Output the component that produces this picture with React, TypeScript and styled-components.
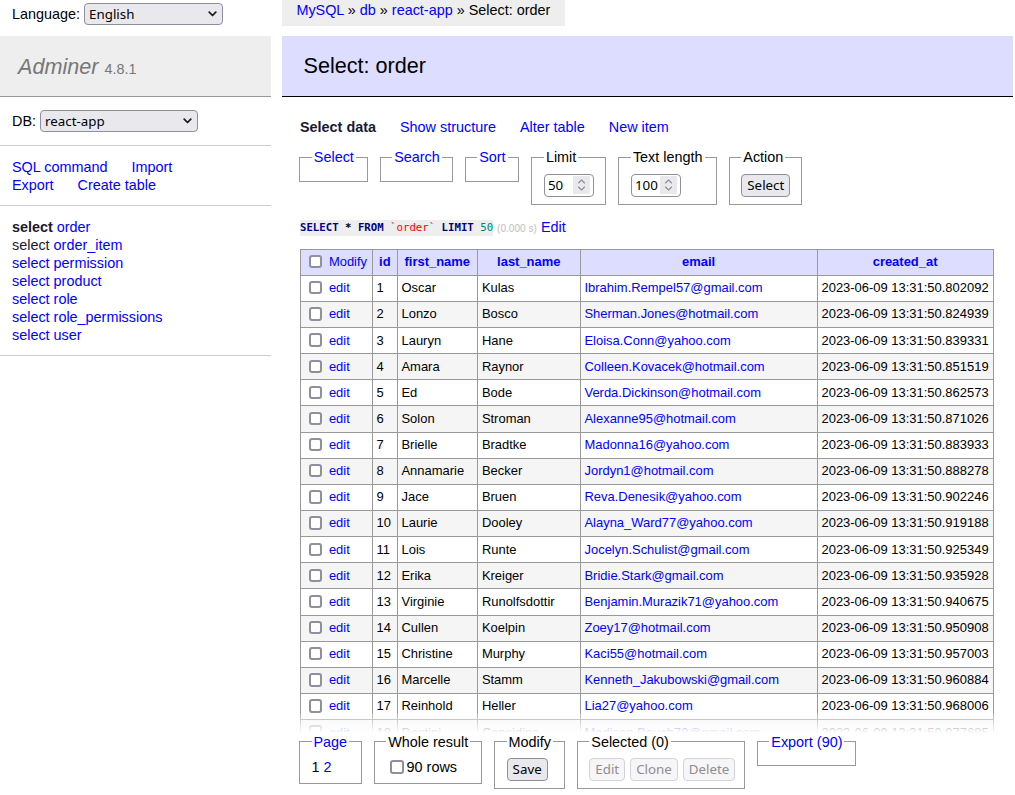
import React from "react";
import styled, { createGlobalStyle } from "styled-components";

const Global = createGlobalStyle`
  html, body { margin: 0; padding: 0; background: #fff; }
  html { scrollbar-width: none; }
  ::-webkit-scrollbar { display: none; }
  body {
    font-family: "Liberation Sans", Arial, sans-serif;
    font-size: 14.4px;
    line-height: 18px;
    color: #000;
  }
  a { color: #0000ff; text-decoration: none; }
`;

const Page = styled.div`
  height: 100vh;
  overflow: hidden;
  display: grid;
  grid-template-columns: 282px 731px;
  align-items: start;
`;

/* ---------- sidebar ---------- */
const Sidebar = styled.aside`
  width: 271px;
`;

const LangBar = styled.div`
  height: 36px;
  box-sizing: border-box;
  padding: 3px 12px 0;
  display: flex;
  align-items: flex-start;
  gap: 4px;
  line-height: 22px;
`;

const Logo = styled.h1`
  margin: 0;
  padding: 16.5px 18px;
  font-size: 21.6px;
  line-height: 27px;
  height: 27px;
  font-weight: normal;
  background: #eee;
  border-bottom: 1px solid #999;
  color: #777;
  white-space: nowrap;
`;

const LogoName = styled.span`
  font-style: italic;
`;

const Version = styled.span`
  font-size: 14.4px;
  line-height: 14px;
  color: #777;
`;

const MenuBlock = styled.div`
  padding: 11.5px 12px;
  border-bottom: 1px solid #ccc;
`;

const DbRow = styled.div`
  display: flex;
  align-items: center;
  gap: 4px;
  height: 25px;
`;

const LinkLine = styled.div`
  display: flex;
  gap: 24px;
  white-space: nowrap;
`;

const TableLine = styled.div`
  white-space: nowrap;
`;

const SelectWord = styled.a<{ $active?: boolean; $dark?: boolean }>`
  color: ${(p) => (p.$dark ? "#1a1a33" : "#0000ff")};
  font-weight: ${(p) => (p.$active ? "bold" : "normal")};
`;

const DropWrap = styled.span`
  position: relative;
  display: inline-block;
  vertical-align: top;
`;

const Drop = styled.select<{ $w: number }>`
  appearance: none;
  -webkit-appearance: none;
  width: ${(p) => p.$w}px;
  height: 22px;
  box-sizing: border-box;
  margin: 0;
  padding: 0 20px 0 4px;
  border: 1px solid #8f8f9d;
  border-radius: 4px;
  background: #e9e9ed;
  color: #000;
  font-family: "Noto Sans", sans-serif;
  font-size: 13.33px;
  line-height: 20px;
  display: block;
`;

const ChevronSlot = styled.span`
  position: absolute;
  right: 6px;
  top: 8px;
  display: flex;
  pointer-events: none;
`;

const Chevron = () => (
  <svg width="9" height="6" viewBox="0 0 9 6">
    <path
      d="M1.2 1.2L4.5 4.5L7.8 1.2"
      fill="none"
      stroke="#1c1b22"
      strokeWidth="1.7"
      strokeLinecap="round"
      strokeLinejoin="round"
    />
  </svg>
);

const Dropdown = ({ w, value }: { w: number; value: string }) => (
  <DropWrap>
    <Drop $w={w} defaultValue={value}>
      <option>{value}</option>
    </Drop>
    <ChevronSlot>
      <Chevron />
    </ChevronSlot>
  </DropWrap>
);

/* ---------- main ---------- */
const Main = styled.main`
  min-width: 0;
`;

const Breadcrumb = styled.nav`
  display: inline-block;
  vertical-align: top;
  height: 25.7px;
  line-height: 21px;
  padding: 0 14.4px;
  background: #eee;
  white-space: nowrap;
`;

const Title = styled.h2`
  margin: 10.3px 0 21px;
  padding: 16.5px 21.6px;
  font-size: 21.6px;
  line-height: 27px;
  font-weight: normal;
  background: #ddf;
  border-bottom: 1px solid #000;
  color: #000;
`;

const Content = styled.div`
  padding: 0 20px 0 18px;
`;

const Tabs = styled.div`
  display: flex;
  gap: 24px;
  white-space: nowrap;
`;

const Tab = styled.a<{ $active?: boolean }>`
  color: ${(p) => (p.$active ? "#1a1a33" : "#0000ff")};
  font-weight: ${(p) => (p.$active ? "bold" : "normal")};
`;

const BoxRow = styled.div`
  margin: 12.5px 0 0 -0.7px;
  display: flex;
  align-items: flex-start;
  gap: 12px;
`;

const Box = styled.fieldset<{ $w?: number }>`
  margin: 0;
  padding: 7.2px 11.52px;
  border: 1px solid #999;
  min-width: 0;
  width: ${(p) => (p.$w ? `${p.$w}px` : "auto")};
  box-sizing: border-box;
  flex: none;
  line-height: 18px;
  white-space: nowrap;
`;

const Legend = styled.legend`
  padding: 0 2px;
  line-height: 18px;
`;

const NumWrap = styled.span`
  display: inline-flex;
  align-items: center;
  width: 50px;
  height: 23px;
  box-sizing: border-box;
  border: 1px solid #8f8f9d;
  border-radius: 4px;
  background: #fff;
  padding: 0 3px 0 3px;
  vertical-align: middle;
`;

const NumInput = styled.input`
  flex: 1;
  min-width: 0;
  width: 10px;
  border: 0;
  outline: 0;
  margin: 0;
  padding: 0;
  background: transparent;
  color: #000;
  font-family: "Noto Sans", sans-serif;
  font-size: 13.33px;
  appearance: textfield;
  -moz-appearance: textfield;
  &::-webkit-inner-spin-button,
  &::-webkit-outer-spin-button {
    -webkit-appearance: none;
    margin: 0;
  }
`;

const Spinner = styled.span`
  flex: none;
  width: 17px;
  height: 18px;
  background: #e9e9ed;
  display: flex;
  align-items: center;
  justify-content: center;
`;

const SpinIcon = () => (
  <svg width="9" height="14" viewBox="0 0 9 14">
    <path d="M1.5 5L4.5 2L7.5 5" fill="none" stroke="#8e8e96" strokeWidth="1.1" strokeLinecap="round" strokeLinejoin="round" />
    <path d="M1.5 9L4.5 12L7.5 9" fill="none" stroke="#8e8e96" strokeWidth="1.1" strokeLinecap="round" strokeLinejoin="round" />
  </svg>
);

const NumberField = ({ value }: { value: number }) => (
  <NumWrap>
    <NumInput type="number" defaultValue={value} />
    <Spinner>
      <SpinIcon />
    </Spinner>
  </NumWrap>
);

const Button = styled.button`
  height: 23.4px;
  box-sizing: border-box;
  margin: 0;
  padding: 0 5px;
  border: 1px solid #8f8f9d;
  border-radius: 4px;
  background: #e9e9ed;
  color: #000;
  font-family: "Noto Sans", sans-serif;
  font-size: 13.33px;
  line-height: 20px;
  vertical-align: middle;
  &:disabled {
    background: #f6f6f8;
    border-color: #d3d3d9;
    color: #8e8e8e;
  }
`;

const ButtonRow = styled.span`
  display: inline-flex;
  gap: 5px;
  vertical-align: middle;
`;

const SqlLine = styled.p`
  margin: 12.5px 0 0;
  white-space: nowrap;
`;

const Code = styled.code`
  background: #eee;
  font-family: "DejaVu Sans Mono", monospace;
  font-size: 10.7px;
  padding: 1.4px 0 1.6px;
`;

const Kw = styled.span`
  color: #000080;
  font-weight: bold;
`;

const Op = styled.span`
  color: #000;
  font-weight: bold;
`;

const Ident = styled.span`
  color: #ff0000;
`;

const Num = styled.span`
  color: #007f7f;
`;

const Time = styled.span`
  color: silver;
  font-size: 10.08px;
`;

const Form = styled.form`
  margin: 0;
`;

const Grid = styled.table`
  margin-top: 11px;
  border-collapse: collapse;
  table-layout: fixed;
  width: 692.6px;
  font-size: 12.96px;
  line-height: 16.2px;
`;

const HeadRow = styled.tr`
  height: 26px;
`;

const HeadLead = styled.td`
  background: #ddf;
  border: 1px solid #999;
  padding: 2.6px 3.9px;
  white-space: nowrap;
`;

const HeadCell = styled.th`
  background: #ddf;
  border: 1px solid #999;
  padding: 2.6px 6.5px;
  text-align: center;
  font-weight: bold;
  white-space: nowrap;
`;

const BodyRow = styled.tr`
  height: 26.15px;
  &:nth-child(2n) {
    background: #f5f5f5;
  }
`;

const Cell = styled.td`
  border: 1px solid #999;
  padding: 2.6px 3.9px;
  white-space: nowrap;
  overflow: hidden;
`;

const Check = styled.input`
  appearance: none;
  -webkit-appearance: none;
  width: 13.4px;
  height: 13.4px;
  box-sizing: border-box;
  border: 2px solid #8f8f9d;
  border-radius: 3px;
  background: #fff;
  margin: 0 3px 0 4px;
  vertical-align: middle;
  position: relative;
  top: -1px;
`;

const Footer = styled.div`
  position: sticky;
  bottom: 0;
  margin-right: -20px;
  border-top: 20px solid rgba(255, 255, 255, 0.7);
  border-image: linear-gradient(rgba(255, 255, 255, 0.2), #fff) 100% 0;
`;

const FooterInner = styled.div`
  background: #fff;
  padding: 0 0 5.7px;
  margin-left: -1px;
  display: flex;
  align-items: flex-start;
  gap: 12px;
`;

const Current = styled.span`
  color: #000;
`;

const CheckLabel = styled.label`
  white-space: nowrap;
`;

type Row = { id: number; first: string; last: string; email: string; ts: string };

const rows: Row[] = [
  { id: 1, first: "Oscar", last: "Kulas", email: "Ibrahim.Rempel57@gmail.com", ts: "802092" },
  { id: 2, first: "Lonzo", last: "Bosco", email: "Sherman.Jones@hotmail.com", ts: "824939" },
  { id: 3, first: "Lauryn", last: "Hane", email: "Eloisa.Conn@yahoo.com", ts: "839331" },
  { id: 4, first: "Amara", last: "Raynor", email: "Colleen.Kovacek@hotmail.com", ts: "851519" },
  { id: 5, first: "Ed", last: "Bode", email: "Verda.Dickinson@hotmail.com", ts: "862573" },
  { id: 6, first: "Solon", last: "Stroman", email: "Alexanne95@hotmail.com", ts: "871026" },
  { id: 7, first: "Brielle", last: "Bradtke", email: "Madonna16@yahoo.com", ts: "883933" },
  { id: 8, first: "Annamarie", last: "Becker", email: "Jordyn1@hotmail.com", ts: "888278" },
  { id: 9, first: "Jace", last: "Bruen", email: "Reva.Denesik@yahoo.com", ts: "902246" },
  { id: 10, first: "Laurie", last: "Dooley", email: "Alayna_Ward77@yahoo.com", ts: "919188" },
  { id: 11, first: "Lois", last: "Runte", email: "Jocelyn.Schulist@gmail.com", ts: "925349" },
  { id: 12, first: "Erika", last: "Kreiger", email: "Bridie.Stark@gmail.com", ts: "935928" },
  { id: 13, first: "Virginie", last: "Runolfsdottir", email: "Benjamin.Murazik71@yahoo.com", ts: "940675" },
  { id: 14, first: "Cullen", last: "Koelpin", email: "Zoey17@hotmail.com", ts: "950908" },
  { id: 15, first: "Christine", last: "Murphy", email: "Kaci55@hotmail.com", ts: "957003" },
  { id: 16, first: "Marcelle", last: "Stamm", email: "Kenneth_Jakubowski@gmail.com", ts: "960884" },
  { id: 17, first: "Reinhold", last: "Heller", email: "Lia27@yahoo.com", ts: "968006" },
  { id: 18, first: "Destini", last: "Considine", email: "Madison.Bauch70@gmail.com", ts: "977685" },
  { id: 19, first: "Kailey", last: "Hills", email: "Tremaine.Ryan@yahoo.com", ts: "985114" },
  { id: 20, first: "Gus", last: "Wiza", email: "Ollie_Jast@gmail.com", ts: "991327" },
  { id: 21, first: "Maida", last: "Ortiz", email: "Lera.Kuhn@hotmail.com", ts: "998402" },
  { id: 22, first: "Nels", last: "Feil", email: "Daphne44@yahoo.com", ts: "999871" },
];

const colWidths = [71.6, 25, 80.4, 102.6, 237, 176];

const tables = ["order", "order_item", "permission", "product", "role", "role_permissions", "user"];

export default function App() {
  return (
    <>
      <Global />
      <Page>
        <Sidebar>
          <LangBar>
            <span>Language:</span>
            <Dropdown w={139} value="English" />
          </LangBar>
          <Logo>
            <LogoName>Adminer</LogoName> <Version>4.8.1</Version>
          </Logo>
          <MenuBlock>
            <DbRow>
              <span>DB:</span>
              <Dropdown w={158} value="react-app" />
            </DbRow>
          </MenuBlock>
          <MenuBlock>
            <LinkLine>
              <a href="#">SQL command</a>
              <a href="#">Import</a>
            </LinkLine>
            <LinkLine>
              <a href="#">Export</a>
              <a href="#">Create table</a>
            </LinkLine>
          </MenuBlock>
          <MenuBlock>
            {tables.map((t, i) => (
              <TableLine key={t}>
                <SelectWord href="#" $active={i === 0} $dark={i < 2}>
                  select
                </SelectWord>{" "}
                <a href="#">{t}</a>
              </TableLine>
            ))}
          </MenuBlock>
        </Sidebar>

        <Main>
          <Breadcrumb>
            <a href="#">MySQL</a> » <a href="#">db</a> » <a href="#">react-app</a> » Select: order
          </Breadcrumb>
          <Title>Select: order</Title>
          <Content>
            <Tabs>
              <Tab href="#" $active>
                Select data
              </Tab>
              <Tab href="#">Show structure</Tab>
              <Tab href="#">Alter table</Tab>
              <Tab href="#">New item</Tab>
            </Tabs>

            <BoxRow>
              <Box $w={68.4}>
                <Legend>
                  <a href="#">Select</a>
                </Legend>
              </Box>
              <Box $w={73}>
                <Legend>
                  <a href="#">Search</a>
                </Legend>
              </Box>
              <Box $w={54.7}>
                <Legend>
                  <a href="#">Sort</a>
                </Legend>
              </Box>
              <Box $w={75}>
                <Legend>Limit</Legend>
                <NumberField value={50} />
              </Box>
              <Box $w={98.4}>
                <Legend>Text length</Legend>
                <NumberField value={100} />
              </Box>
              <Box $w={73.4}>
                <Legend>Action</Legend>
                <Button type="button">Select</Button>
              </Box>
            </BoxRow>

            <SqlLine>
              <Code>
                <Kw>SELECT</Kw> <Op>*</Op> <Kw>FROM</Kw> <Ident>`order`</Ident> <Kw>LIMIT</Kw> <Num>50</Num>
              </Code>{" "}
              <Time>(0.000 s)</Time> <a href="#">Edit</a>
            </SqlLine>

            <Form onSubmit={(e) => e.preventDefault()}>
              <Grid>
                <colgroup>
                  {colWidths.map((w, i) => (
                    <col key={i} style={{ width: w }} />
                  ))}
                </colgroup>
                <thead>
                  <HeadRow>
                    <HeadLead>
                      <Check type="checkbox" /> <a href="#">Modify</a>
                    </HeadLead>
                    <HeadCell>
                      <a href="#">id</a>
                    </HeadCell>
                    <HeadCell>
                      <a href="#">first_name</a>
                    </HeadCell>
                    <HeadCell>
                      <a href="#">last_name</a>
                    </HeadCell>
                    <HeadCell>
                      <a href="#">email</a>
                    </HeadCell>
                    <HeadCell>
                      <a href="#">created_at</a>
                    </HeadCell>
                  </HeadRow>
                </thead>
                <tbody>
                  {rows.map((r) => (
                    <BodyRow key={r.id}>
                      <Cell>
                        <Check type="checkbox" /> <a href="#">edit</a>
                      </Cell>
                      <Cell>{r.id}</Cell>
                      <Cell>{r.first}</Cell>
                      <Cell>{r.last}</Cell>
                      <Cell>
                        <a href="#">{r.email}</a>
                      </Cell>
                      <Cell>2023-06-09 13:31:50.{r.ts}</Cell>
                    </BodyRow>
                  ))}
                </tbody>
              </Grid>

              <Footer>
                <FooterInner>
                  <Box $w={62.7}>
                    <Legend>
                      <a href="#">Page</a>
                    </Legend>
                    <Current>1</Current> <a href="#">2</a>
                  </Box>
                  <Box $w={108.4}>
                    <Legend>Whole result</Legend>
                    <CheckLabel>
                      <Check type="checkbox" />
                      90 rows
                    </CheckLabel>
                  </Box>
                  <Box $w={70.7}>
                    <Legend>Modify</Legend>
                    <Button type="button">Save</Button>
                  </Box>
                  <Box $w={168}>
                    <Legend>Selected (0)</Legend>
                    <ButtonRow>
                      <Button type="button" disabled>
                        Edit
                      </Button>
                      <Button type="button" disabled>
                        Clone
                      </Button>
                      <Button type="button" disabled>
                        Delete
                      </Button>
                    </ButtonRow>
                  </Box>
                  <Box $w={99.4}>
                    <Legend>
                      <a href="#">Export (90)</a>
                    </Legend>
                  </Box>
                </FooterInner>
              </Footer>
            </Form>
          </Content>
        </Main>
      </Page>
    </>
  );
}
